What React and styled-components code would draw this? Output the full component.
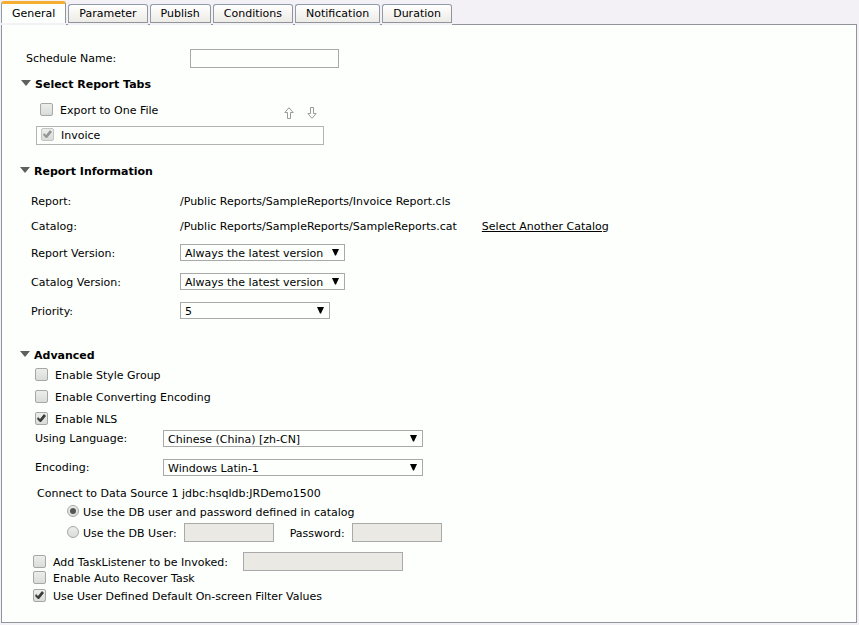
import { useState } from "react";
import styled, { createGlobalStyle, css } from "styled-components";

const tabs = [
  "General",
  "Parameter",
  "Publish",
  "Conditions",
  "Notification",
  "Duration",
];

const Select = ({ id, value, width }) => (
  <SelectWrapper $width={width}>
    <NativeSelect id={id} defaultValue={value}>
      <option>{value}</option>
    </NativeSelect>
    <SelectArrow viewBox="0 0 7 7" aria-hidden="true">
      <path d="M0 0h7L4 6.5h-1z" fill="#000" />
    </SelectArrow>
  </SelectWrapper>
);

const Check = ({ label, ...rest }) => (
  <CheckLabel>
    <Checkbox type="checkbox" {...rest} />
    {label}
  </CheckLabel>
);

const SectionTitle = ({ children, open, onToggle, inset }) => (
  <Heading $inset={inset}>
    <Toggle type="button" aria-expanded={open} onClick={onToggle}>
      <Caret viewBox="0 0 10 6" aria-hidden="true">
        <path d="M0 0h10L5 6z" fill="#5f5f5c" />
      </Caret>
      {children}
    </Toggle>
  </Heading>
);

const App = () => {
  const [active, setActive] = useState("General");
  const [open, setOpen] = useState({ tabs: true, info: true, advanced: true });
  const [dbUser, setDbUser] = useState("catalog");

  const toggle = (key) => setOpen({ ...open, [key]: !open[key] });

  return (
    <Page>
      <GlobalStyle />
      <TabList role="tablist">
        {tabs.map((tab) => (
          <TabItem key={tab} role="presentation">
            <Tab
              type="button"
              role="tab"
              aria-selected={tab === active}
              $active={tab === active}
              onClick={() => setActive(tab)}
            >
              {tab}
            </Tab>
          </TabItem>
        ))}
      </TabList>

      <Panel>
        <ScheduleRow>
          <label htmlFor="schedule">Schedule Name:</label>
          <TextInput id="schedule" type="text" $width={149} />
        </ScheduleRow>

        <Section $gap={2}>
          <SectionTitle open={open.tabs} onToggle={() => toggle("tabs")} inset>
            Select Report Tabs
          </SectionTitle>
          {open.tabs && (
            <ReportTabs>
              <ExportRow>
                <Check label="Export to One File" />
                <Arrows>
                  <ArrowButton type="button" aria-label="Move up">
                    <ArrowIcon viewBox="0 0 10 12">
                      <path d="M5 .7L9.2 5.5H6.5v6h-3v-6H.8z" />
                    </ArrowIcon>
                  </ArrowButton>
                  <ArrowButton type="button" aria-label="Move down">
                    <ArrowIcon viewBox="0 0 10 12">
                      <path d="M5 11.3L9.2 6.5H6.5v-6h-3v6H.8z" />
                    </ArrowIcon>
                  </ArrowButton>
                </Arrows>
              </ExportRow>
              <ReportList>
                <Check label="Invoice" defaultChecked disabled />
              </ReportList>
            </ReportTabs>
          )}
        </Section>

        <Section $gap={16}>
          <SectionTitle open={open.info} onToggle={() => toggle("info")}>
            Report Information
          </SectionTitle>
          {open.info && (
            <InfoList>
              <InfoRow>
                <span>Report:</span>
                <span>/Public Reports/SampleReports/Invoice Report.cls</span>
              </InfoRow>
              <InfoRow>
                <span>Catalog:</span>
                <Catalog>
                  /Public Reports/SampleReports/SampleReports.cat
                  <CatalogLink href="#catalog">Select Another Catalog</CatalogLink>
                </Catalog>
              </InfoRow>
              <InfoRow $tall>
                <label htmlFor="reportVersion">Report Version:</label>
                <Select
                  id="reportVersion"
                  value="Always the latest version"
                  width={165}
                />
              </InfoRow>
              <InfoRow $tall>
                <label htmlFor="catalogVersion">Catalog Version:</label>
                <Select
                  id="catalogVersion"
                  value="Always the latest version"
                  width={165}
                />
              </InfoRow>
              <InfoRow $tall>
                <label htmlFor="priority">Priority:</label>
                <Select id="priority" value="5" width={150} />
              </InfoRow>
            </InfoList>
          )}
        </Section>

        <Section $gap={20}>
          <SectionTitle open={open.advanced} onToggle={() => toggle("advanced")}>
            Advanced
          </SectionTitle>
          {open.advanced && (
            <>
              <Options>
                <Check label="Enable Style Group" />
                <Check label="Enable Converting Encoding" />
                <Check label="Enable NLS" defaultChecked />
              </Options>
              <Languages>
                <LanguageRow>
                  <label htmlFor="language">Using Language:</label>
                  <Select
                    id="language"
                    value="Chinese (China) [zh-CN]"
                    width={260}
                  />
                </LanguageRow>
                <LanguageRow>
                  <label htmlFor="encoding">Encoding:</label>
                  <Select id="encoding" value="Windows Latin-1" width={260} />
                </LanguageRow>
              </Languages>

              <DataSource>
                <Legend>Connect to Data Source 1 jdbc:hsqldb:JRDemo1500</Legend>
                <RadioRow>
                  <RadioLabel>
                    <Radio
                      type="radio"
                      name="dbUser"
                      checked={dbUser === "catalog"}
                      onChange={() => setDbUser("catalog")}
                    />
                    Use the DB user and password defined in catalog
                  </RadioLabel>
                </RadioRow>
                <RadioRow>
                  <RadioLabel>
                    <Radio
                      type="radio"
                      name="dbUser"
                      checked={dbUser === "custom"}
                      onChange={() => setDbUser("custom")}
                    />
                    Use the DB User:
                  </RadioLabel>
                  <TextInput
                    type="text"
                    aria-label="DB User"
                    disabled={dbUser === "catalog"}
                    $width={90}
                  />
                  <PasswordLabel htmlFor="password">Password:</PasswordLabel>
                  <TextInput
                    id="password"
                    type="password"
                    disabled={dbUser === "catalog"}
                    $width={90}
                  />
                </RadioRow>
              </DataSource>

              <TaskOptions>
                <ListenerRow>
                  <Check label="Add TaskListener to be Invoked:" />
                  <TextInput
                    type="text"
                    aria-label="TaskListener"
                    disabled
                    $width={160}
                  />
                </ListenerRow>
                <Check label="Enable Auto Recover Task" />
                <FilterRow>
                  <Check
                    label="Use User Defined Default On-screen Filter Values"
                    defaultChecked
                  />
                </FilterRow>
              </TaskOptions>
            </>
          )}
        </Section>
      </Panel>
    </Page>
  );
};

const font = `11px "DejaVu Sans", Verdana, sans-serif`;

const GlobalStyle = createGlobalStyle`
  * {
    box-sizing: border-box;
  }

  body {
    margin: 0;
    background-color: #f3f1f5;
    color: #000;
    font: ${font};
    line-height: 14px;
  }

  button,
  input,
  select {
    margin: 0;
    font: ${font};
    color: inherit;
  }
`;

const Page = styled.div`
  display: flex;
  flex-direction: column;
  min-height: 100vh;
  padding: 1px 2px 2px 1px;
`;

const TabList = styled.div`
  display: flex;
  align-items: flex-end;
  gap: 2px;
  margin-bottom: -1px;
  z-index: 1;
`;

const TabItem = styled.div`
  padding-bottom: 2px;
  background-color: #f3f1f5;
`;

const Tab = styled.button`
  display: block;
  height: 19px;
  padding: 0 10px;
  border: 1px solid #8f9dab;
  border-right-color: #8f959b;
  border-bottom-color: #8f959b;
  border-radius: 3px 3px 0 0;
  background: linear-gradient(#ffffff, #f6f5f2 50%, #ecebe6);
  line-height: 14px;
  white-space: nowrap;

  ${({ $active }) =>
    $active &&
    css`
      height: 22px;
      border-top: 3px solid #f5ae30;
      border-bottom: 0;
      background: #fcfffc;
    `}
`;

const Panel = styled.main`
  flex: 1;
  padding: 19px 18px 16px;
  border: 1px solid #8f959b;
  background-color: #fcfffc;
`;

const ScheduleRow = styled.div`
  display: grid;
  grid-template-columns: 164px auto;
  justify-content: start;
  align-items: center;
  min-height: 28px;
  padding-left: 6px;

  label {
    padding-top: 2px;
  }
`;

const TextInput = styled.input`
  width: ${({ $width }) => $width}px;
  height: 19px;
  padding: 1px 4px;
  border: 1px solid #a9a9a9;
  background-color: #fcfffc;

  &:disabled {
    background-color: #ebe9e4;
  }
`;

const Section = styled.section`
  margin-top: ${({ $gap }) => $gap}px;
`;

const Heading = styled.h2`
  margin: 0;
  padding: 4px 0 2px;
  padding-left: ${({ $inset }) => ($inset ? 1 : 0)}px;
`;

const Toggle = styled.button`
  display: flex;
  align-items: center;
  gap: 4px;
  padding: 0;
  border: 0;
  background: none;
  font-weight: bold;
  line-height: 14px;
`;

const Caret = styled.svg`
  width: 10px;
  height: 6px;
  margin-bottom: 4px;
`;

const CheckLabel = styled.label`
  display: flex;
  align-items: center;
  gap: 7px;
  white-space: nowrap;
`;

const Checkbox = styled.input`
  appearance: none;
  flex: none;
  width: 13px;
  height: 13px;
  margin-bottom: 3px;
  border: 1px solid #a6a8a6;
  border-radius: 2px;
  background: linear-gradient(#eceeec, #dadcda);

  &:checked::after {
    content: "";
    display: block;
    width: 11px;
    height: 11px;
    background-color: #3c3c3c;
    clip-path: polygon(
      8px 1px,
      10px 3px,
      5px 9px,
      4px 9px,
      1px 6px,
      2px 4px,
      4px 6px
    );
  }

  &:disabled {
    border-color: #c3c5c3;
  }

  &:disabled::after {
    background-color: #969696;
  }
`;

const ReportTabs = styled.div`
  width: 288px;
  margin-left: 16px;
`;

const ExportRow = styled.div`
  display: flex;
  justify-content: space-between;
  align-items: center;
  min-height: 32px;
  padding: 2px 7px 0 4px;
`;

const Arrows = styled.div`
  display: flex;
  gap: 13px;
  padding-top: 4px;
`;

const ArrowButton = styled.button`
  padding: 0;
  border: 0;
  background: none;
`;

const ArrowIcon = styled.svg`
  display: block;
  width: 10px;
  height: 12px;
  fill: #fcfffc;
  stroke: #9a9a9a;
`;

const ReportList = styled.div`
  padding: 1px 4px 0;
  border: 1px solid #b3b3b3;
`;

const InfoList = styled.div`
  padding: 7px 0 0 11px;
`;

const InfoRow = styled.div`
  display: grid;
  grid-template-columns: 149px auto;
  justify-content: start;
  align-items: center;
  min-height: ${({ $tall }) => ($tall ? 29 : 25)}px;

  & > span,
  & > label {
    padding-top: 2px;
  }
`;

const Catalog = styled.span`
  display: flex;
  gap: 25px;
`;

const CatalogLink = styled.a`
  color: inherit;
`;

const SelectWrapper = styled.div`
  position: relative;
  width: ${({ $width }) => $width}px;
`;

const NativeSelect = styled.select`
  appearance: none;
  display: block;
  width: 100%;
  height: 17px;
  padding: 1px 18px 0 4px;
  border: 1px solid #a9a9a9;
  border-radius: 0;
  background-color: #fcfffc;
`;

const SelectArrow = styled.svg`
  position: absolute;
  top: 5px;
  right: 6px;
  width: 7px;
  height: 7px;
  pointer-events: none;
`;

const Options = styled.div`
  display: flex;
  flex-direction: column;
  gap: 6px;
  padding: 3px 0 0 15px;
`;

const Languages = styled.div`
  display: flex;
  flex-direction: column;
  gap: 12px;
  padding: 2px 0 0 15px;
`;

const LanguageRow = styled.div`
  display: grid;
  grid-template-columns: 128px auto;
  justify-content: start;
  align-items: center;
`;

const DataSource = styled.fieldset`
  min-width: 0;
  margin: 0;
  padding: 0 0 0 47px;
  border: 0;
`;

const Legend = styled.legend`
  margin-left: -30px;
  padding: 11px 0 4px;
`;

const RadioRow = styled.div`
  display: flex;
  align-items: flex-end;
  gap: 7px;

  & + & {
    margin-top: 2px;
  }
`;

const RadioLabel = styled.label`
  display: flex;
  align-items: center;
  gap: 4px;
  white-space: nowrap;
`;

const Radio = styled.input`
  appearance: none;
  flex: none;
  width: 12px;
  height: 12px;
  margin-bottom: 4px;
  border: 1px solid #a6a8a6;
  border-radius: 50%;
  background: linear-gradient(#eceeec, #dadcda);

  &:checked::after {
    content: "";
    display: block;
    width: 6px;
    height: 6px;
    margin: 2px;
    border-radius: 50%;
    background-color: #555;
  }
`;

const PasswordLabel = styled.label`
  margin-left: 9px;
  padding-bottom: 1px;
`;

const TaskOptions = styled.div`
  padding: 10px 0 0 13px;
`;

const ListenerRow = styled.div`
  display: flex;
  align-items: flex-end;
  gap: 15px;
`;

const FilterRow = styled.div`
  padding-top: 2px;
`;

export default App;
